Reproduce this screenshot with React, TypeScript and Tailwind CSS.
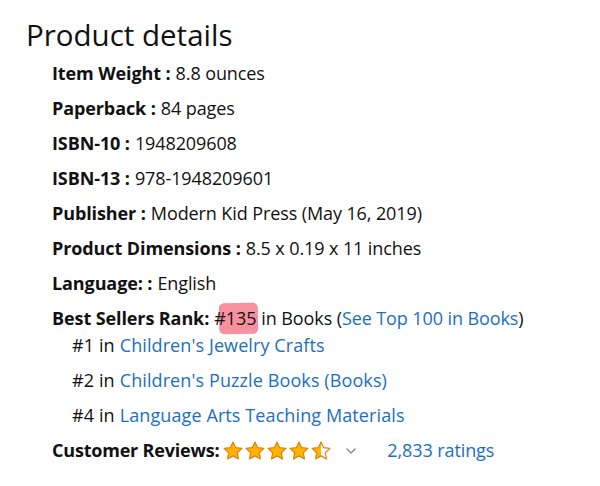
import { FiChevronDown } from 'react-icons/fi'

const DETAILS: [string, string][] = [
  ['Item Weight :', '8.8 ounces'],
  ['Paperback :', '84 pages'],
  ['ISBN-10 :', '1948209608'],
  ['ISBN-13 :', '978-1948209601'],
  ['Publisher :', 'Modern Kid Press (May 16, 2019)'],
  ['Product Dimensions :', '8.5 x 0.19 x 11 inches'],
  ['Language: :', 'English'],
]

const SUB_RANKS: [string, string][] = [
  ['#1', "Children's Jewelry Crafts"],
  ['#2', "Children's Puzzle Books (Books)"],
  ['#4', 'Language Arts Teaching Materials'],
]

function Star({ fill }: { fill: 'full' | 'half' }) {
  return (
    <svg width="22" height="22" viewBox="0 0 24 24">
      <defs>
        <linearGradient id="half">
          <stop offset="50%" stopColor="#FFB400" />
          <stop offset="50%" stopColor="#ffffff" />
        </linearGradient>
      </defs>
      <path
        d="M12 2.2l2.9 6.2 6.8.8-5 4.7 1.3 6.8L12 17.3l-6 3.4 1.3-6.8-5-4.7 6.8-.8z"
        fill={fill === 'full' ? '#FFB400' : 'url(#half)'}
        stroke="#D9820F"
        strokeWidth="1.3"
        strokeLinejoin="round"
      />
    </svg>
  )
}

export default function App() {
  return (
    <div className="w-[600px] h-[486px] bg-white text-[#111] font-['Open_Sans',sans-serif] pl-[26px] pt-[16px]">
      <h2 className="text-[29.5px] leading-[38px]">Product details</h2>

      <div className="pl-[26px] pt-[2px] text-[18px] tracking-[-0.1px]">
        {DETAILS.map(([label, value]) => (
          <div key={label} className="h-[35px] flex items-center">
            <span className="font-bold">{label}</span>
            <span className="ml-[5px]">{value}</span>
          </div>
        ))}

        <div className="h-[35px] flex items-center">
          <span className="font-bold">Best Sellers Rank:</span>
          <span className="ml-[5px] relative">
            <span className="absolute left-[5px] -right-[2px] -top-[2px] -bottom-[2px] bg-[#f5566c]/65 rounded-[5px] -rotate-1" />
            <span className="relative">#135</span>
          </span>
          <span className="ml-[5px]">in Books (</span>
          <span className="text-[#1a6fc4]">See Top 100 in Books</span>
          <span>)</span>
        </div>

        <div className="pl-[20px] -mt-[8px] tracking-[0.1px]">
          {SUB_RANKS.map(([rank, cat]) => (
            <div key={rank} className="h-[35px] flex items-center">
              <span>{rank} in</span>
              <span className="ml-[5px] text-[#1a6fc4]">{cat}</span>
            </div>
          ))}
        </div>

        <div className="h-[35px] flex items-center">
          <span className="font-bold tracking-[-0.2px]">Customer Reviews:</span>
          <div className="ml-[3px] flex items-center">
            <Star fill="full" />
            <Star fill="full" />
            <Star fill="full" />
            <Star fill="full" />
            <Star fill="half" />
          </div>
          <FiChevronDown className="ml-[11px] text-[#888] w-[16px] h-[16px]" />
          <span className="ml-[28px] text-[#1a6fc4]">2,833 ratings</span>
        </div>
      </div>
    </div>
  )
}
